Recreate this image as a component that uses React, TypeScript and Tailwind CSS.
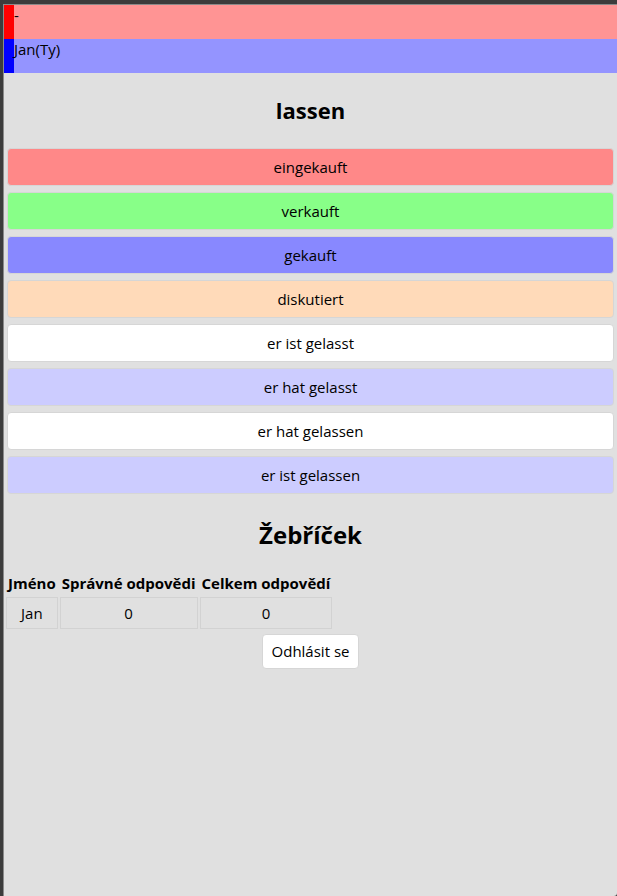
import React from "react";

const players = [
  { name: "-", bar: "bg-[#ff9494]", mark: "bg-[#ff0000]" },
  { name: "Jan(Ty)", bar: "bg-[#9494ff]", mark: "bg-[#0000ff]" },
];

const answers = [
  { text: "eingekauft", cls: "bg-[#ff8888]" },
  { text: "verkauft", cls: "bg-[#88ff88]" },
  { text: "gekauft", cls: "bg-[#8888ff]" },
  { text: "diskutiert", cls: "bg-[#ffdab9]" },
  { text: "er ist gelasst", cls: "bg-white" },
  { text: "er hat gelasst", cls: "bg-[#ccccff]" },
  { text: "er hat gelassen", cls: "bg-white" },
  { text: "er ist gelassen", cls: "bg-[#ccccff]" },
];

export default function App() {
  return (
    <div
      className="min-h-screen bg-[#3c3c3c] pt-[4px] pl-[3px] text-black"
      style={{ fontFamily: '"Open Sans", "Noto Sans", sans-serif' }}
    >
      <div className="min-h-[892px] bg-[#e0e0e0] border-t border-l border-[#8a8a8a] rounded-br-[3px]">
        {/* Players */}
        {players.map((p) => (
          <div key={p.name} className={`flex h-[34px] ${p.bar}`}>
            <div className={`w-[10px] ${p.mark}`} />
            <span className="text-[15px] leading-[20px]">{p.name}</span>
          </div>
        ))}

        <h2 className="mt-[22px] mb-[23px] text-center text-[22px] font-bold leading-[30px]">
          lassen
        </h2>

        <div className="flex flex-col gap-[6px] px-[3px]">
          {answers.map((a) => (
            <button
              key={a.text}
              className={`h-[38px] w-full rounded-[4px] border border-[#d6d6d6] text-[15px] ${a.cls}`}
            >
              {a.text}
            </button>
          ))}
        </div>

        <h2 className="mt-[25px] mb-[18px] text-center text-[24px] font-bold leading-[32px]">
          Žebříček
        </h2>

        <table className="border-separate border-spacing-[2px] text-[15px]">
          <thead>
            <tr>
              <th className="px-[2px] py-0 leading-[24px]">Jméno</th>
              <th className="px-[2px] py-0 leading-[24px]">Správné odpovědi</th>
              <th className="px-[2px] py-0 leading-[24px]">Celkem odpovědí</th>
            </tr>
          </thead>
          <tbody>
            <tr>
              <td className="h-[32px] border border-[#d2d2d2] text-center">Jan</td>
              <td className="h-[32px] border border-[#d2d2d2] text-center">0</td>
              <td className="h-[32px] border border-[#d2d2d2] text-center">0</td>
            </tr>
          </tbody>
        </table>

        <div className="mt-[3px] flex justify-center">
          <button className="h-[35px] rounded-[4px] border border-[#d6d6d6] bg-white px-[9px] text-[15px]">
            Odhlásit se
          </button>
        </div>
      </div>
    </div>
  );
}
